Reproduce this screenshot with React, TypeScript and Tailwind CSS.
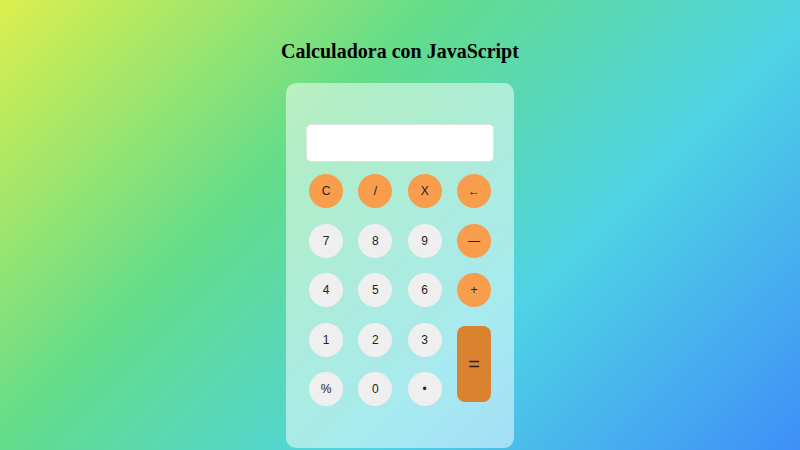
import React from "react";

const keys = [
  { label: "C", kind: "op" },
  { label: "/", kind: "op" },
  { label: "X", kind: "op" },
  { label: "←", kind: "op" },
  { label: "7", kind: "num" },
  { label: "8", kind: "num" },
  { label: "9", kind: "num" },
  { label: "—", kind: "op" },
  { label: "4", kind: "num" },
  { label: "5", kind: "num" },
  { label: "6", kind: "num" },
  { label: "+", kind: "op" },
  { label: "1", kind: "num" },
  { label: "2", kind: "num" },
  { label: "3", kind: "num" },
  { label: "=", kind: "eq" },
  { label: "%", kind: "num" },
  { label: "0", kind: "num" },
  { label: "•", kind: "num" },
];

function Key({ label, kind }: { label: string; kind: string }) {
  if (kind === "eq") {
    return (
      <button className="row-span-2 self-center w-[34px] h-[76px] rounded-[8px] bg-[#d9822f] text-[20px] text-[#222]">
        {label}
      </button>
    );
  }
  const color = kind === "op" ? "bg-[#f89d4b]" : "bg-[#efefef]";
  return (
    <button
      className={`w-[34px] h-[34px] rounded-full ${color} text-[12px] text-[#222] flex items-center justify-center`}
    >
      {label}
    </button>
  );
}

export default function App() {
  return (
    <div className="min-h-screen overflow-hidden bg-[linear-gradient(135deg,#dcef4c_0%,#62dc8c_36%,#4fd3e4_66%,#3f8ff8_100%)] flex flex-col items-center font-['Liberation_Sans',sans-serif]">
      <h1 className="mt-[37px] h-[28px] leading-[28px] text-[20px] font-bold text-black font-['Liberation_Serif',serif]">
        Calculadora con JavaScript
      </h1>
      <div className="mt-[18px] w-[228px] rounded-[10px] bg-white/50 px-[20px] pt-[41px] pb-[42px]">
        <div className="h-[38px] rounded-[5px] bg-white border border-[#e2e2e2]" />
        <div className="mt-[12px] px-[3px] grid grid-cols-[repeat(4,34px)] justify-between gap-y-[15.5px]">
          {keys.map((k) => (
            <Key key={k.label} label={k.label} kind={k.kind} />
          ))}
        </div>
      </div>
    </div>
  );
}
